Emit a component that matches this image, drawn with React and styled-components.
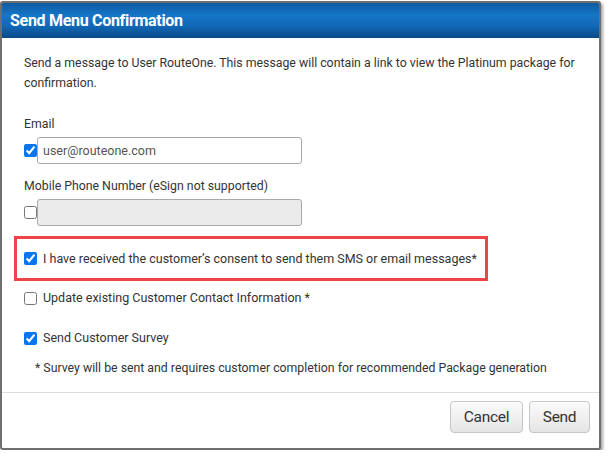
import React from "react";
import styled, { createGlobalStyle } from "styled-components";

const Global = createGlobalStyle`
  html, body { margin: 0; padding: 0; background: #ffffff; }
  body { font-family: Roboto, "Liberation Sans", sans-serif; }
  * { box-sizing: border-box; }
`;

const Dialog = styled.div`
  margin-top: 1px;
  width: 601px;
  height: 449px;
  border: 2px solid #6f6f6f;
  border-radius: 3px;
  background: #ffffff;
  box-shadow: 2px 2px 3px rgba(0, 0, 0, 0.35);
  display: flex;
  flex-direction: column;
  overflow: hidden;
`;

const Header = styled.div`
  height: 35px;
  flex: none;
  display: flex;
  align-items: center;
  padding-left: 8px;
  background: linear-gradient(#0d5aa2 0%, #1676c8 35%, #1169b8 65%, #0a4a86 100%);
  color: #ffffff;
  font-family: Roboto, "Liberation Sans", sans-serif;
  font-weight: 700;
  font-size: 16px;
  letter-spacing: -0.3px;
`;

const Body = styled.div`
  flex: 1;
  padding: 15px 12px 0 20px;
  color: #333333;
  font-size: 12.3px;
`;

const Intro = styled.p`
  margin: 0 0 23px 2px;
  line-height: 20px;
  width: 563px;
`;

const Label = styled.div`
  margin-left: 2px;
  line-height: 16px;
  margin-bottom: 5px;
`;

const FieldRow = styled.div`
  display: flex;
  align-items: center;
  margin-bottom: ${(p) => p.$gap}px;
`;

const Check = styled.input.attrs({ type: "checkbox" })`
  width: 13px;
  height: 13px;
  margin: 0 0 0 2px;
  flex: none;
  accent-color: #0b75f0;
`;

const TextBox = styled.input`
  width: 265px;
  height: 27px;
  border: 1px solid #a9a9a9;
  border-radius: 3px;
  padding: 0 5px;
  font-family: Roboto, "Liberation Sans", sans-serif;
  font-size: 12.5px;
  color: #555555;
  background: ${(p) => (p.disabled ? "#ebebeb" : "#ffffff")};
  outline: none;
`;

const Highlight = styled.div`
  margin: 10px 0 0 -8px;
  width: 474px;
  height: 45px;
  border: 3px solid #ef4447;
  display: flex;
  align-items: center;
  padding-left: 5px;
`;

const OptionRow = styled.label`
  display: flex;
  align-items: center;
  gap: 6px;
  line-height: 20px;
  margin-top: ${(p) => p.$top}px;
  font-size: 12.5px;
`;

const Note = styled.div`
  margin: 12px 0 0 13px;
  line-height: 16px;
  font-size: 12.3px;
`;

const Footer = styled.div`
  flex: none;
  height: 56px;
  border-top: 1px solid #dcdcdc;
  display: flex;
  justify-content: flex-end;
  align-items: flex-start;
  gap: 6px;
  padding: 8px 9px 0 0;
`;

const Button = styled.button`
  height: 32px;
  width: ${(p) => p.$w}px;
  border: 1px solid #c6c6c6;
  border-radius: 4px;
  background: linear-gradient(#fbfbfb, #e4e4e4);
  color: #333333;
  font-family: Roboto, "Liberation Sans", sans-serif;
  font-size: 15.5px;
  letter-spacing: -0.3px;
  padding: 0;
  box-shadow: inset 0 1px 0 #ffffff;
`;

export default function App() {
  return (
    <>
      <Global />
      <Dialog>
        <Header>Send Menu Confirmation</Header>
        <Body>
          <Intro>
            Send a message to User RouteOne. This message will contain a link to view the Platinum package for
            confirmation.
          </Intro>
          <Label>Email</Label>
          <FieldRow $gap={14}>
            <Check defaultChecked />
            <TextBox defaultValue="user@routeone.com" />
          </FieldRow>
          <Label>Mobile Phone Number (eSign not supported)</Label>
          <FieldRow $gap={0}>
            <Check />
            <TextBox disabled />
          </FieldRow>
          <Highlight>
            <OptionRow $top={0}>
              <Check defaultChecked />
              I have received the customer’s consent to send them SMS or email messages*
            </OptionRow>
          </Highlight>
          <OptionRow $top={7}>
            <Check />
            Update existing Customer Contact Information *
          </OptionRow>
          <OptionRow $top={20}>
            <Check defaultChecked />
            Send Customer Survey
          </OptionRow>
          <Note>* Survey will be sent and requires customer completion for recommended Package generation</Note>
        </Body>
        <Footer>
          <Button $w={73}>Cancel</Button>
          <Button $w={61}>Send</Button>
        </Footer>
      </Dialog>
    </>
  );
}
